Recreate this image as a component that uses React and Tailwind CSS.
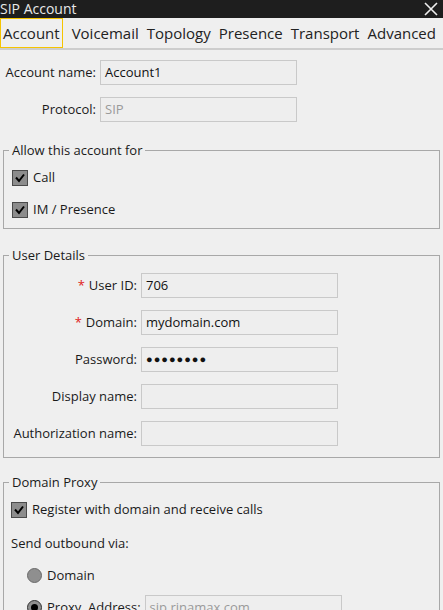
import React from 'react';

const font = { fontFamily: '"Open Sans", "Noto Sans", sans-serif' };

function Check({ label }) {
  return (
    <div className="flex items-center h-[16px]">
      <span className="w-[16px] h-[16px] bg-[#8c8c8c] border border-[#4a4a4a] flex items-center justify-center">
        <svg width="12" height="12" viewBox="0 0 12 12">
          <path d="M2 5.5 L5 9 L10 2.5" fill="none" stroke="#000" strokeWidth="2" />
        </svg>
      </span>
      <span className="ml-[5px] text-[13px] text-[#1a1a1a]">{label}</span>
    </div>
  );
}

function Field({ label, value, required, disabled, labelW, password }) {
  return (
    <div className="flex items-center">
      <div className="text-right text-[13px] text-[#1a1a1a] pr-[4px]" style={{ width: labelW }}>
        {required && <span className="text-[#e02020] mr-[4px]">*</span>}
        {label}
      </div>
      <div className="w-[197px] h-[25px] border border-[#c9c9c9] bg-[#eeeeee] flex items-center px-[4px] text-[13px]">
        <span className={disabled ? 'text-[#9a9a9a]' : password ? 'text-[#111] tracking-[1px] text-[11px]' : 'text-[#111]'}>
          {value}
        </span>
      </div>
    </div>
  );
}

function Group({ title, children, className }) {
  return (
    <fieldset className={`mx-[3px] border border-[#a8a8a8] ${className}`}>
      <legend className="ml-[5px] px-[3px] text-[13px] text-[#1a1a1a] leading-[18px]">{title}</legend>
      {children}
    </fieldset>
  );
}

export default function App() {
  const tabs = ['Account', 'Voicemail', 'Topology', 'Presence', 'Transport', 'Advanced'];
  return (
    <div className="w-[443px] h-[610px] overflow-hidden bg-[#efefef]" style={font}>
      {/* title bar */}
      <div className="h-[18px] bg-[#1e1e1e] flex items-center justify-between">
        <span className="text-[14px] leading-[18px] text-[#e8e8e8] -mt-[1px]">SIP Account</span>
        <svg width="14" height="14" viewBox="0 0 14 14" className="mr-[5px]">
          <path d="M1 1 L13 13 M13 1 L1 13" stroke="#eee" strokeWidth="1.6" />
        </svg>
      </div>

      {/* tabs */}
      <div className="h-[32px] flex items-end border-b-2 border-[#cdcdcd]">
        {tabs.map((t, i) => (
          <div
            key={t}
            className={`h-[30px] flex items-center text-[15px] text-[#222] ${
              i === 0 ? 'border border-[#f5c400] px-[2px] mr-[5px]' : 'px-[4px]'
            }`}
          >
            {t}
          </div>
        ))}
      </div>

      {/* account */}
      <div className="mt-[10px] flex flex-col gap-[12px]">
        <Field label="Account name:" value="Account1" labelW="100px" />
        <Field label="Protocol:" value="SIP" disabled labelW="100px" />
      </div>

      <Group title="Allow this account for" className="mt-[19px] h-[88px]">
        <div className="flex flex-col gap-[16px] mt-[11px] px-[8px]">
          <Check label="Call" />
          <Check label="IM / Presence" />
        </div>
      </Group>

      <Group title="User Details" className="mt-[17px] h-[212px]">
        <div className="flex flex-col gap-[12px] pt-[9px]">
          <Field label="User ID:" value="706" required labelW="137px" />
          <Field label="Domain:" value="mydomain.com" required labelW="137px" />
          <Field label="Password:" value="●●●●●●●●" password labelW="137px" />
          <Field label="Display name:" value="" labelW="137px" />
          <Field label="Authorization name:" value="" labelW="137px" />
        </div>
      </Group>

      <Group title="Domain Proxy" className="mt-[15px] h-[160px]">
        <div className="px-[7px]">
          <div className="mt-[11px]">
            <Check label="Register with domain and receive calls" />
          </div>
          <div className="mt-[16px] text-[13px] text-[#1a1a1a]">Send outbound via:</div>
          <div className="mt-[12px] ml-[16px] flex items-center">
            <span className="w-[15px] h-[15px] rounded-full bg-[#8f8f8f] border border-[#6a6a6a]" />
            <span className="ml-[5px] text-[13px] text-[#1a1a1a]">Domain</span>
          </div>
          <div className="mt-[10px] ml-[16px] flex items-center">
            <span className="w-[15px] h-[15px] rounded-full bg-[#8f8f8f] border border-[#333] flex items-center justify-center">
              <span className="w-[7px] h-[7px] rounded-full bg-black" />
            </span>
            <span className="ml-[5px] text-[13px] text-[#1a1a1a]">Proxy&nbsp;&nbsp;Address:</span>
            <div className="ml-[4px] w-[197px] h-[25px] border border-[#c9c9c9] bg-[#eeeeee] flex items-center px-[4px] text-[13px] text-[#9a9a9a]">
              sip.rinamax.com
            </div>
          </div>
        </div>
      </Group>
    </div>
  );
}
